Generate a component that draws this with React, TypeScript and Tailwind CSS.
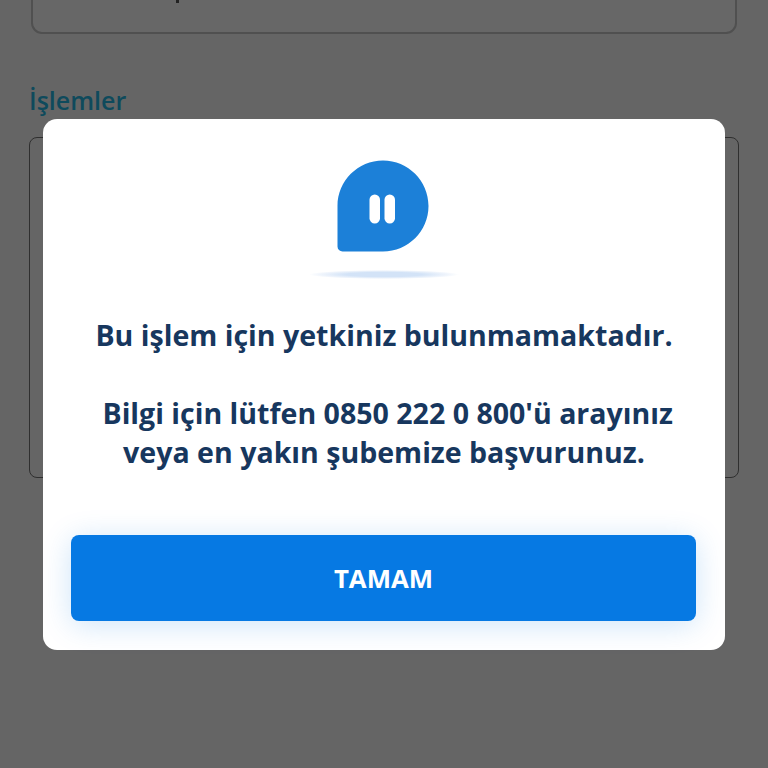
export default function App() {
  return (
    <div
      className="relative h-[768px] w-[768px] overflow-hidden bg-[#656565]"
      style={{ fontFamily: '"Open Sans", sans-serif' }}
    >
      {/* dimmed page behind the dialog */}
      <div className="flex flex-col px-[29px]">
        <div className="mx-[2px] -mt-[20px] flex h-[54px] items-start justify-start rounded-[11px] border-2 border-[#505050] bg-[#676767] pl-[143px]">
          <div className="mt-[16px] h-[5px] w-[3px] bg-[#222222]" />
        </div>
        <div className="mt-[50px] h-[32px] text-[25px] leading-[32px] font-semibold text-[#0e4a5c]">
          İşlemler
        </div>
        <div className="mt-[21px] h-[341px] rounded-[8px] border border-[#2f2f2f]" />
      </div>

      {/* dialog */}
      <div className="absolute top-[119px] left-[43px] flex h-[531px] w-[682px] flex-col items-center rounded-[14px] bg-white px-[28px]">
        <svg width="92" height="92" viewBox="0 0 92 92" className="mt-[41px] -ml-[2px]">
          <path
            d="M46 0.5C71.1 0.5 91.5 20.9 91.5 46S71.1 91.5 46 91.5H5.5A5 5 0 0 1 0.5 86.5V46C0.5 20.9 20.9 0.5 46 0.5Z"
            fill="#1c80d8"
          />
          <rect x="32.5" y="34.5" width="10.5" height="29" rx="5.25" fill="#ffffff" />
          <rect x="47.5" y="34.5" width="10.5" height="29" rx="5.25" fill="#ffffff" />
        </svg>
        <div className="mt-[18px] h-[9px] w-[150px] rounded-[50%] bg-[radial-gradient(closest-side,#d3e3f7_50%,#f0f5fc_85%,#ffffff)]" />
        <p className="mt-[36px] whitespace-nowrap text-center text-[28.55px] leading-[39px] font-bold text-[#17375e]">
          Bu işlem için yetkiniz bulunmamaktadır.
        </p>
        <p className="mt-[39px] whitespace-nowrap text-center text-[28.55px] leading-[39px] font-bold text-[#17375e]">
          &nbsp;Bilgi için lütfen 0850 222 0 800'ü arayınız
          <br />
          veya en yakın şubemize başvurunuz.
        </p>
        <button className="mt-[64px] -ml-[1px] flex h-[86px] w-[625px] shrink-0 items-center justify-center rounded-[8px] bg-[#0679e3] text-[25.8px] font-bold text-white shadow-[0_4px_30px_rgba(6,121,227,0.2)]">
          TAMAM
        </button>
      </div>
    </div>
  );
}
